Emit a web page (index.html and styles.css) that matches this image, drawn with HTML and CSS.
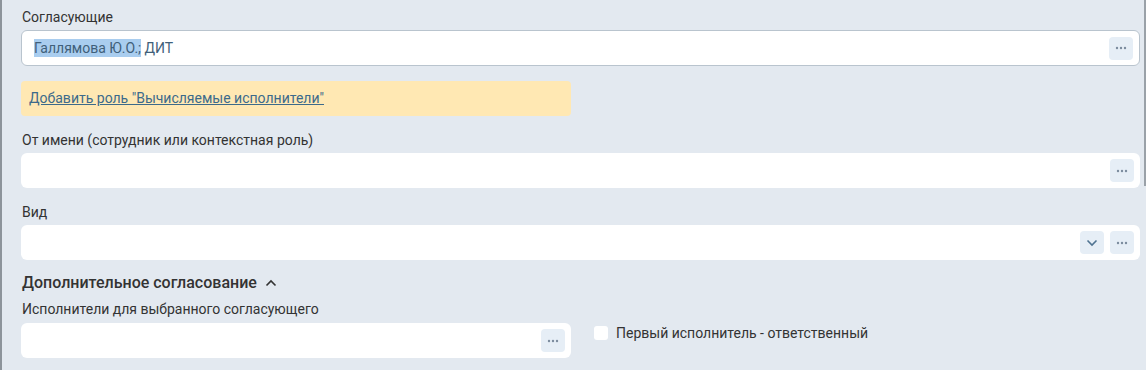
FILE: index.html
```html
<!DOCTYPE html>
<html>
<head>
    <title>Согласование</title>
    <link rel="stylesheet" href="styles.css">
</head>
<body>
    <div id="form">

        <div class="label">Согласующие</div>
        <div class="field bordered">
            <div class="value"><span class="selected">Галлямова Ю.О.;</span> ДИТ</div>
            <button class="btn"><svg width="14" height="4" viewBox="0 0 14 4"><circle cx="3" cy="2" r="1.2"/><circle cx="7" cy="2" r="1.2"/><circle cx="11" cy="2" r="1.2"/></svg></button>
        </div>

        <div class="notice">
            <a href="#">Добавить роль "Вычисляемые исполнители"</a>
        </div>

        <div class="label">От имени (сотрудник или контекстная роль)</div>
        <div class="field">
            <div class="value"></div>
            <button class="btn"><svg width="14" height="4" viewBox="0 0 14 4"><circle cx="3" cy="2" r="1.2"/><circle cx="7" cy="2" r="1.2"/><circle cx="11" cy="2" r="1.2"/></svg></button>
        </div>

        <div class="label">Вид</div>
        <div class="field">
            <div class="value"></div>
            <button class="btn">
                <svg width="12" height="8" viewBox="0 0 12 8"><path d="M1.5 1.5 L6 6 L10.5 1.5" fill="none" stroke="#4f7391" stroke-width="1.6"/></svg>
            </button>
            <button class="btn"><svg width="14" height="4" viewBox="0 0 14 4"><circle cx="3" cy="2" r="1.2"/><circle cx="7" cy="2" r="1.2"/><circle cx="11" cy="2" r="1.2"/></svg></button>
        </div>

        <div class="section">
            Дополнительное согласование
            <svg width="12" height="8" viewBox="0 0 12 8"><path d="M1.5 6.5 L6 2 L10.5 6.5" fill="none" stroke="#333" stroke-width="1.6"/></svg>
        </div>

        <div class="label sub">Исполнители для выбранного согласующего</div>
        <div class="row">
            <div class="field half">
                <div class="value"></div>
                <button class="btn"><svg width="14" height="4" viewBox="0 0 14 4"><circle cx="3" cy="2" r="1.2"/><circle cx="7" cy="2" r="1.2"/><circle cx="11" cy="2" r="1.2"/></svg></button>
            </div>
            <label class="check">
                <span class="box"></span>
                Первый исполнитель - ответственный
            </label>
        </div>
    </div>
    <div id="scroll"></div>
</body>
</html>
```

FILE: styles.css
```css
body {
    margin: 0;
    height: 370px;
    overflow: hidden;
    background-color: #e3e9f0;
    font-family: Roboto, "Liberation Sans", sans-serif;
    font-size: 14px;
    color: #333;
    border-left: 2px solid #8d949b;
    box-sizing: border-box;
    position: relative;
}
#form {
    padding: 6px 6px 0 19px;
    width: 1119px;
}
.label {
    height: 22px;
    line-height: 22px;
    padding-left: 1px;
    margin-bottom: 2px;
}
.label.sub {
    margin-top: 3px;
    margin-bottom: 3px;
}
.field {
    display: flex;
    align-items: center;
    gap: 6px;
    height: 35px;
    background-color: #fff;
    border-radius: 6px;
    padding: 0 6px 0 12px;
    box-sizing: border-box;
    margin-bottom: 13px;
}
.field.bordered {
    border: 1px solid #b9c4ce;
    height: 36px;
    margin-bottom: 15px;
}
.value {
    flex: 1;
    color: #3f5f7a;
    font-size: 14px;
}
.selected {
    background-color: #a9cdef;
    padding: 1px 0;
}
.btn {
    width: 24px;
    height: 23px;
    border: none;
    border-radius: 4px;
    background-color: #e6eef6;
    fill: #7b8c9e;
    padding: 0;
    display: flex;
    align-items: center;
    justify-content: center;
}
.notice {
    width: 550px;
    height: 35px;
    line-height: 35px;
    background-color: #ffe8b3;
    border-radius: 4px;
    padding-left: 8px;
    box-sizing: border-box;
    margin-bottom: 13px;
}
.notice a {
    color: #3c6a8b;
}
.section {
    font-size: 16px;
    font-weight: 500;
    height: 24px;
    line-height: 24px;
    padding-left: 1px;
    margin-top: -2px;
    display: flex;
    align-items: center;
    gap: 8px;
}
.row {
    display: flex;
    align-items: flex-start;
    gap: 23px;
}
.field.half {
    width: 550px;
}
.check {
    display: flex;
    align-items: center;
    gap: 8px;
    height: 20px;
}
.box {
    width: 14px;
    height: 14px;
    background-color: #fff;
    border-radius: 3px;
}
#scroll {
    position: absolute;
    right: 0;
    top: 0;
    width: 2px;
    height: 186px;
    background-color: #9aa1a8;
}
```
